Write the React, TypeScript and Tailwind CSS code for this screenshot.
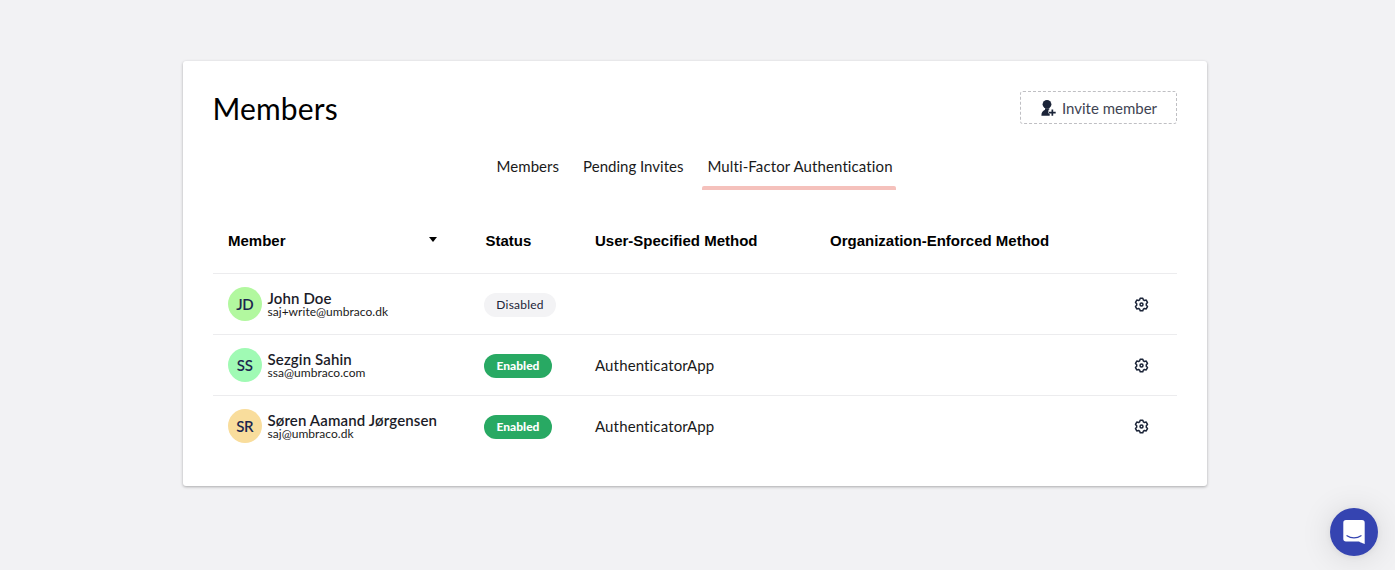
import React from "react";

type Member = {
  initials: string;
  name: string;
  email: string;
  color: string;
  enabled: boolean;
  method: string;
};

const members: Member[] = [
  { initials: "JD", name: "John Doe", email: "saj+write@umbraco.dk", color: "bg-[#b2f89f]", enabled: false, method: "" },
  { initials: "SS", name: "Sezgin Sahin", email: "ssa@umbraco.com", color: "bg-[#a0fab4]", enabled: true, method: "AuthenticatorApp" },
  { initials: "SR", name: "Søren Aamand Jørgensen", email: "saj@umbraco.dk", color: "bg-[#f9dd9c]", enabled: true, method: "AuthenticatorApp" },
];

const columns = "grid grid-cols-[256px_111px_235px_1fr_72px] items-center pl-[15px]";

function InviteIcon() {
  return (
    <svg className="h-4 w-4 shrink-0" viewBox="-0.5 0 16 16" fill="#1b2438">
      <ellipse cx="6.500" cy="4.300" rx="4.400" ry="4.300" />
      <path d="M4.500 8.300h4.300v1.500h-.8v2.800h1.200v3.100H.9c0-3.200 1.100-4.900 3.600-5.900z" />
      <path d="M11 9.400h1.700v2.300h2.500v1.700h-2.500v2.300H11v-2.300H8.500v-1.700H11z" stroke="white" strokeWidth="1" paintOrder="stroke" />
    </svg>
  );
}

function GearIcon() {
  return (
    <svg className="h-4 w-4" viewBox="-0.5 0.5 16 16" fill="none" stroke="#1b2438" strokeLinejoin="round">
      <path
        strokeWidth="1.5"
        d="M6.700 1.700h2.600l.6 1.700 1 .6 1.800-.4 1.300 2.300-1.200 1.400v1.400l1.200 1.400-1.300 2.300-1.800-.4-1 .6-.6 1.700H6.700l-.6-1.700-1-.6-1.800.4L2 10.100l1.200-1.400V7.300L2 5.900l1.300-2.300 1.800.4 1-.6z"
      />
      <circle cx="8" cy="8" r="1.500" strokeWidth="1.500" />
    </svg>
  );
}

function MemberRow({ member }: { member: Member }) {
  return (
    <div className={`${columns} h-[61px] border-t border-[#ececee]`}>
      <div className="flex items-center gap-[5.5px]">
        <div className={`flex h-[34px] w-[34px] items-center justify-center rounded-full pr-[0.5px] text-[15px] font-semibold tracking-[-0.3px] text-[#1b264f] ${member.color}`}>
          {member.initials}
        </div>
        <div className="pt-px">
          <div className="text-[15px] leading-[15px] font-semibold tracking-[0.13px] text-[#1b1c28]">{member.name}</div>
          <div className="text-[12px] leading-[12px] tracking-[0.03px]">{member.email}</div>
        </div>
      </div>
      <div className="pt-px">
        {member.enabled ? (
          <span className="flex h-6 w-[68px] items-center justify-center rounded-full bg-[#28a963] text-[12px] font-black text-white">Enabled</span>
        ) : (
          <span className="flex h-6 w-[72px] items-center justify-center rounded-full bg-[#f3f3f5] text-[12px] tracking-[0.2px] text-[#1b2438]">Disabled</span>
        )}
      </div>
      <div className="tracking-[0.14px]">{member.method}</div>
      <div />
      <button className="flex w-[72px] justify-center pt-px">
        <GearIcon />
      </button>
    </div>
  );
}

export default function App() {
  return (
    <div className="relative h-[570px] w-full bg-[#f2f2f4] pt-[61px] pl-[183px] font-[Lato,sans-serif] text-[15px] leading-5 text-[#1a1a1a] [font-variant-ligatures:none]">
      <main className="h-[425px] w-[1024px] rounded-[3px] bg-white px-[30px] pt-[30px] shadow-[0_1px_3px_rgba(0,0,0,0.3)]">
        <header className="flex h-[35px] items-start justify-between">
          <h1 className="-mt-px -ml-[0.5px] text-[30px] leading-[36px] tracking-[0.15px] text-black">Members</h1>
          <button className="flex h-[33px] w-[157px] items-center justify-center gap-[6px] rounded-[3px] border border-dashed border-[#bfbfc3] text-[#404453]">
            <InviteIcon />
            <span>Invite member</span>
          </button>
        </header>
        <nav className="mt-[23px] flex h-[41px] justify-center gap-[14px] pt-[7px] pr-[2px] whitespace-nowrap">
          <a className="px-[5px] tracking-[0.05px]">Members</a>
          <a className="px-[5px]">Pending Invites</a>
          <a className="flex h-[34px] w-[194px] flex-col justify-between tracking-[0.11px]">
            <span className="pl-[5px]">Multi-Factor Authentication</span>
            <span className="h-1 rounded-t-[2px] bg-[#f5c1bc]" />
          </a>
        </nav>
        <section className="mt-[18px]">
          <div className={`${columns} h-[65px] font-['Liberation_Sans',Arial,sans-serif] font-bold text-black`}>
            <div className="flex items-center justify-between pr-[47px]">
              Member
              <svg className="mb-[2px] h-[5px] w-2" viewBox="0 0 8 5"><path d="M0 0h8L4 5z" /></svg>
            </div>
            <div className="pl-[1.5px]">Status</div>
            <div>User-Specified Method</div>
            <div>Organization-Enforced Method</div>
          </div>
          {members.map((m) => (
            <MemberRow key={m.initials} member={m} />
          ))}
        </section>
      </main>
      <button className="absolute top-[508px] left-[1330px] flex h-12 w-12 items-center justify-center rounded-full bg-[#3544b1] shadow-[0_1px_6px_rgba(0,0,0,0.06),0_2px_32px_rgba(0,0,0,0.12)]">
        <svg className="h-6 w-[22px]" viewBox="0 0 22 24">
          <path fill="white" d="M3 0h16a2.700 2.700 0 0 1 2.700 2.700V24s-3.700-1.200-5.700-2.500H3A2.700 2.700 0 0 1 .3 18.800V2.700A2.700 2.700 0 0 1 3 0z" />
          <path fill="none" stroke="#3544b1" strokeWidth="1.200" strokeLinecap="round" d="M4 15.700c4 3 10 3 14 0" />
        </svg>
      </button>
    </div>
  );
}
